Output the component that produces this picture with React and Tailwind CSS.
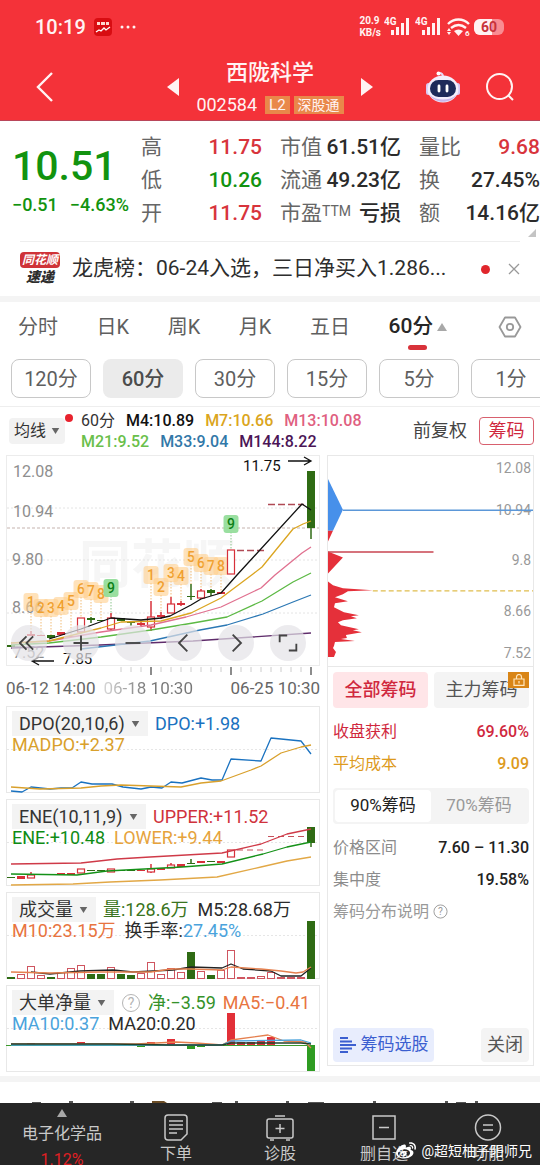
import { useState } from 'react';
import { FaWeibo } from 'react-icons/fa';

const RED = '#d7303a';
const GREEN = '#2f6b14';

// every bar sits on the same 10px pitch in all of the left hand charts
const barX = (i) => 5 + i * 10;

const QUOTES = [
  [
    { label: '高', value: '11.75', color: 'text-[#d8343c]' },
    { label: '低', value: '10.26', color: 'text-[#12930f]' },
    { label: '开', value: '11.75', color: 'text-[#d8343c]' },
  ],
  [
    { label: '市值', value: '61.51亿', color: 'text-[#2b2b2b]' },
    { label: '流通', value: '49.23亿', color: 'text-[#2b2b2b]' },
    { label: '市盈', sup: 'TTM', value: '亏损', color: 'text-[#2b2b2b]' },
  ],
  [
    { label: '量比', value: '9.68', color: 'text-[#d8343c]' },
    { label: '换', value: '27.45%', color: 'text-[#2b2b2b]' },
    { label: '额', value: '14.16亿', color: 'text-[#2b2b2b]' },
  ],
];

const PERIODS = ['分时', '日K', '周K', '月K', '五日'];
const MINUTES = ['120分', '60分', '30分', '15分', '5分', '1分'];

// [index, type, top, bottom, wick top, wick bottom]; r = hollow red, f = filled red, g = green
const CANDLES = [
  [0, 'g', 190, 192],
  [2, 'f', 179, 181, 176, 181],
  [3, 'f', 180, 181],
  [4, 'g', 180, 183],
  [5, 'f', 177, 180],
  [6, 'f', 181, 182],
  [7, 'r', 163, 177],
  [8, 'g', 163, 165, 162, 168],
  [9, 'g', 165, 166],
  [10, 'r', 163, 174, 158, 176],
  [11, 'g', 163, 166],
  [12, 'g', 167, 168, 166, 171],
  [13, 'f', 168, 170, 166, 171],
  [14, 'r', 162, 172, 146, 176],
  [15, 'f', 160, 162, 157, 164],
  [16, 'r', 149, 158, 142, 158],
  [17, 'f', 148, 150, 146, 151],
  [18, 'g', 141, 142, 129, 145],
  [19, 'r', 136, 143, 134, 144],
  [20, 'g', 135, 138, 134, 141],
  [21, 'f', 137, 139],
  [22, 'r', 95, 119],
  [30, 'g', 16, 73, 16, 84],
];

const ENE_CANDLES = [
  [0, 'g', 78, 79],
  [1, 'f', 77, 80],
  [2, 'r', 76, 79, 73, 79],
  [3, 'g', 75, 76],
  [5, 'f', 74, 76],
  [6, 'f', 74, 76],
  [7, 'r', 70, 74],
  [8, 'g', 71, 72],
  [9, 'g', 71, 72],
  [10, 'r', 70, 73],
  [11, 'g', 71, 72],
  [12, 'g', 71, 72],
  [13, 'f', 71, 72],
  [14, 'r', 70, 73, 65, 74],
  [15, 'f', 69, 71],
  [16, 'r', 66, 69, 64, 69],
  [17, 'f', 65, 68],
  [18, 'g', 64, 65, 60, 65],
  [19, 'f', 62, 64],
  [20, 'g', 62, 63],
  [21, 'f', 62, 64],
  [22, 'r', 51, 58],
  [30, 'g', 28, 44, 28, 48],
];

// nine-turn counters: [x index, y, digit]
const TURNS = [
  [2, 147, 1], [3, 153, 2], [4, 153, 3], [5, 151, 4], [6, 146, 5], [7, 134, 6], [8, 136, 7], [9, 139, 8], [10, 133, 9],
  [14, 120, 1], [15, 132, 2], [16, 118, 3], [17, 121, 4], [18, 102, 5], [19, 108, 6], [20, 111, 7], [21, 111, 8], [22, 69, 9],
];

const TURN_ENDS = [178, 180, 180, 176, 180, 162, 162, 164, 160, 146, 158, 142, 146, 129, 134, 134, 137, 95];

const AVERAGES = [
  { color: '#5f2c6b', points: '5,193 94,190 187,186 305,178' },
  { color: '#2c78b4', points: '75,194 144,186 194,175 221,170 257,159 287,147 305,140' },
  { color: '#5cb944', points: '5,190 43,188 95,182 145,175 187,168 221,162 256,146 287,127 305,118' },
  { color: '#e0708f', points: '5,188 43,186 95,177 145,170 180,162 215,152 255,133 269,120 296,98 305,92' },
  { color: '#dba520', points: '5,188 43,186 95,173 115,167 155,166 185,158 215,143 247,119 256,112 287,74 297,69 305,66' },
  { color: '#111111', points: '43,184 75,174 105,163 135,165 155,163 164,161 185,150 195,144 215,138 231,120 296,49 305,55' },
];

const VOLUMES = [
  ['g', 2], ['r', 4], ['r', 12], ['r', 3], ['g', 2], ['r', 6], ['r', 10], ['r', 13], ['g', 5], ['g', 5],
  ['r', 11], ['g', 5], ['g', 4], ['r', 5], ['r', 16], ['r', 4], ['r', 10], ['r', 6], ['g', 27], ['r', 7],
  ['g', 4], ['r', 8], ['r', 28], ['r', 1], ['r', 1], ['r', 2], ['r', 6], ['r', 1], ['r', 1], ['r', 1], ['g', 58],
];

// net big orders, positive above the base line
const NET = [
  [2, 2], [7, 3], [11, -1], [13, -2], [14, 3], [16, 6], [18, -4], [19, -2],
  [22, 32], [23, 3], [24, 3], [25, 5], [26, 8], [30, -26],
];

function Caret({ up, className }) {
  return (
    <svg viewBox="0 0 10 8" className={className} aria-hidden="true">
      <path d={up ? 'M5 0 10 8H0z' : 'M0 0h10L5 8z'} fill="currentColor" />
    </svg>
  );
}

function Line({ points, color }) {
  return <polyline points={points} fill="none" stroke={color} strokeWidth="1.3" strokeLinejoin="round" />;
}

function Candles({ data }) {
  return data.map(([i, type, top, bottom, high, low]) => {
    const x = barX(i);
    const color = type === 'g' ? GREEN : RED;
    return (
      <g key={i}>
        {high !== undefined && <path d={`M${x} ${high}V${low}`} stroke={color} strokeWidth="1.5" />}
        {type === 'r' ? (
          <rect x={x - 3.5} y={top} width="7" height={bottom - top} fill="#fff" stroke={color} strokeWidth="1.2" />
        ) : (
          <rect x={x - 4} y={top} width="8" height={bottom - top} fill={color} />
        )}
      </g>
    );
  });
}

function Signal() {
  return (
    <svg viewBox="0 0 28 22" className="h-[22px] w-7" aria-hidden="true">
      <text x="0" y="9" fontSize="10" fontWeight="700" fill="currentColor">4G</text>
      <path d="M7 14h3v5H7zM12 11h3v8h-3zM17 7h3v12h-3zM22 2h3v17h-3z" fill="currentColor" />
    </svg>
  );
}

function StatusBar() {
  return (
    <div className="flex h-[54px] items-center justify-between pl-[35px] pr-9">
      <div className="flex items-center gap-2">
        <span className="text-xl font-medium">10:19</span>
        <svg viewBox="0 0 18 18" className="size-[18px]" aria-hidden="true">
          <rect width="18" height="18" rx="4" fill="#d80d12" />
          <path d="M3 4h3v3H3zM7 4h4v3H7zM12 4h3v3h-3z" fill="#ffd9d0" />
          <path d="m2 14 3-2 2 1 3-3 2 2 4-3" fill="none" stroke="#fff" strokeWidth="1.3" />
        </svg>
        <svg viewBox="0 0 16 4" className="h-1 w-4" fill="currentColor" aria-hidden="true">
          <circle cx="2" cy="2" r="1.5" />
          <circle cx="8" cy="2" r="1.5" />
          <circle cx="14" cy="2" r="1.5" />
        </svg>
      </div>
      <div className="flex items-center gap-[3px]">
        <div className="text-[10px] font-bold leading-3">
          <div>20.9</div>
          <div>KB/s</div>
        </div>
        <Signal />
        <Signal />
        <svg viewBox="0 0 25 20" className="h-5 w-[25px]" fill="none" stroke="currentColor" aria-hidden="true">
          <path d="M2 7c6-6 15-6 21 0M5 11c5-4 10-4 15 0" strokeWidth="2.4" />
          <path d="m8 14 4.500 5 4.500-5c-3-2-6-2-9 0z" fill="currentColor" stroke="none" />
          <path d="m1 14 2-3 2 3zM1 15h4l-2 3z" fill="currentColor" stroke="none" />
          <text x="19" y="19" fontSize="8" fontWeight="700" fill="currentColor" stroke="none">6</text>
        </svg>
        <div className="relative flex h-4 w-[30px] items-center justify-center overflow-hidden rounded-md bg-[#f98c92]">
          <div className="absolute inset-y-0 left-0 w-[60%] bg-[#fff2f2]" />
          <span className="relative text-sm font-bold leading-4 text-[#c8323a]">60</span>
        </div>
      </div>
    </div>
  );
}

function Header() {
  return (
    <header className="border-b border-[#b9465a] bg-[#f43239] text-[#fff3f3]">
      <StatusBar />
      <div className="grid h-[66px] grid-cols-[1fr_auto_1fr] items-center">
        <button type="button" aria-label="返回" className="ml-[35px] justify-self-start">
          <svg viewBox="0 0 20 30" className="h-[30px] w-5" fill="none" stroke="currentColor" strokeWidth="2.400">
            <path d="M17 1 3 15l14 14" />
          </svg>
        </button>
        <div className="flex items-center gap-[17px]">
          <button type="button" aria-label="上一只">
            <svg viewBox="0 0 12 18" className="h-[18px] w-3" fill="currentColor"><path d="M12 0v18L0 9z" /></svg>
          </button>
          <div className="flex flex-col items-center gap-1">
            <h1 className="text-[22px] font-medium leading-8">西陇科学</h1>
            <div className="flex items-center gap-1">
              <span className="mr-1 text-lg leading-6">002584</span>
              <span className="bg-[#e9884a] px-1 text-[15px] leading-[18px]">L2</span>
              <span className="bg-[#e9884a] px-1 text-sm leading-[18px]">深股通</span>
            </div>
          </div>
          <button type="button" aria-label="下一只">
            <svg viewBox="0 0 12 18" className="h-[18px] w-3" fill="currentColor"><path d="m0 0 12 9L0 18z" /></svg>
          </button>
        </div>
        <div className="mr-[25px] flex items-center gap-[25px] justify-self-end">
          <button type="button" aria-label="智能助手">
            <svg viewBox="0 0 34 32" className="h-8 w-[34px]">
              <path d="M17 6c0-3-1-4-4-4" fill="none" stroke="#e6d5f5" strokeWidth="2" />
              <circle cx="12.500" cy="2.500" r="2" fill="#fff" />
              <rect x="0" y="12" width="5" height="12" rx="2.500" fill="#d9c8f4" />
              <rect x="29" y="12" width="5" height="12" rx="2.500" fill="#d9c8f4" />
              <ellipse cx="17" cy="18" rx="15.500" ry="13.500" fill="#f4eefc" />
              <path d="M4 24c6 6 20 6 26 0-4 9-22 9-26 0z" fill="#c9b8ec" />
              <rect x="4" y="9" width="26" height="17" rx="8.500" fill="#1e2a5a" />
              <path d="M13 15v5M21 15v5" stroke="#fff" strokeWidth="2.800" strokeLinecap="round" />
            </svg>
          </button>
          <button type="button" aria-label="搜索">
            <svg viewBox="0 0 30 30" className="size-[30px]" fill="none" stroke="currentColor" strokeWidth="2">
              <circle cx="14.500" cy="14.500" r="12.500" />
              <path d="m23 23 5 5" />
            </svg>
          </button>
        </div>
      </div>
    </header>
  );
}

function Quote() {
  return (
    <section className="relative flex gap-[18px] pb-[11px] pt-[10px] leading-[33px]">
      <div className="w-[123px] whitespace-nowrap pl-3 pt-[14px] font-medium text-[#12930f]">
        <div className="text-[41px] leading-[42px]">10.51</div>
        <div className="flex gap-3 text-lg leading-9">
          <span>−0.51</span>
          <span>−4.63%</span>
        </div>
      </div>
      {QUOTES.map((col) => (
        <dl key={col[0].label} className="flex-1 text-[21px]">
          {col.map((q) => (
            <div key={q.label} className="flex justify-between whitespace-nowrap">
              <dt className="flex text-[#666]">
                {q.label}
                {q.sup && <span className="text-sm leading-7">{q.sup}</span>}
              </dt>
              <dd className={`font-medium ${q.color}`}>{q.value}</dd>
            </div>
          ))}
        </dl>
      ))}
      <svg viewBox="0 0 8 8" className="absolute bottom-1 right-1 size-2" aria-hidden="true">
        <path d="M8 0v8H0z" fill="#c4c4c4" />
      </svg>
    </section>
  );
}

function News() {
  return (
    <section className="mx-5 flex h-[55px] items-center border-t border-[#eee] text-[#2e2e2e]">
      <div className="flex w-10 shrink-0 flex-col items-center italic">
        <span className="w-full rounded-sm bg-[#cf3338] text-center text-xs font-bold leading-4 text-white">同花顺</span>
        <span className="text-sm font-black leading-[18px]">速递</span>
      </div>
      <p className="ml-3 min-w-0 flex-1 whitespace-nowrap text-[21px]">龙虎榜：06-24入选，三日净买入1.286...</p>
      <span className="ml-5 size-[9px] shrink-0 rounded-full bg-[#e0262c]" />
      <button type="button" aria-label="关闭提示" className="ml-[18px] shrink-0">
        <svg viewBox="0 0 12 12" className="size-3" stroke="#999" strokeWidth="1.300"><path d="m1 1 10 10M11 1 1 11" /></svg>
      </button>
    </section>
  );
}

function PeriodTabs() {
  const [minute, setMinute] = useState('60分');
  return (
    <section className="border-b border-t-[6px] border-b-[#eee] border-t-[#f4f4f4] text-[#5f5f5f]">
      <nav className="flex h-[50px] items-center justify-between px-[18px] text-xl">
        {PERIODS.map((p) => (
          <button key={p} type="button">{p}</button>
        ))}
        <button type="button" className="relative flex items-center gap-1 text-[21px] font-medium text-[#262626]">
          60分
          <Caret up className="h-2 w-[10px] text-[#a8a8a8]" />
          <span className="absolute -bottom-2 left-[19px] h-[5px] w-[19px] rounded-full bg-[#d8323a]" />
        </button>
        <button type="button" aria-label="设置" className="ml-3">
          <svg viewBox="0 0 24 24" className="size-6" fill="none" stroke="#999" strokeWidth="1.800">
            <path d="M7 2.500h10L22.500 12 17 21.500H7L1.500 12z" strokeLinejoin="round" />
            <circle cx="12" cy="12" r="3.200" />
          </svg>
        </button>
      </nav>
      <div className="flex gap-3 overflow-hidden pb-2 pl-[11px] pt-[7px]">
        {MINUTES.map((m) => (
          <button
            key={m}
            type="button"
            onClick={() => setMinute(m)}
            className={
              m === minute
                ? 'h-[39px] w-20 shrink-0 rounded-lg bg-[#ebebeb] text-xl font-medium text-[#4c4c4c]'
                : 'h-[39px] w-20 shrink-0 rounded-lg border border-[#c8c8c8] text-xl'
            }
          >
            {m}
          </button>
        ))}
      </div>
    </section>
  );
}

function Averages() {
  return (
    <section className="flex h-12 items-center pl-[9px] pr-[6px]">
      <div className="relative">
        <label className="flex h-[26px] items-center gap-1 rounded bg-[#f2f2f2] px-[5px] text-base text-[#333]">
          <select aria-label="指标" className="appearance-none bg-transparent leading-6">
            <option>均线</option>
          </select>
          <Caret className="h-[6px] w-[9px] text-[#666]" />
        </label>
        <span className="absolute -right-2 -top-1 size-2 rounded-full bg-[#e8232e]" />
      </div>
      <div className="ml-4 flex-1 whitespace-nowrap text-base font-medium leading-[21px]">
        <div className="flex gap-[11px]">
          <span className="font-normal text-[#333]">60分</span>
          <span className="text-[#111]">M4:10.89</span>
          <span className="text-[#dba520]">M7:10.66</span>
          <span className="text-[#e0607f]">M13:10.08</span>
        </div>
        <div className="flex gap-[11px]">
          <span className="text-[#6abf4b]">M21:9.52</span>
          <span className="text-[#3278a8]">M33:9.04</span>
          <span className="text-[#4b1556]">M144:8.22</span>
        </div>
      </div>
      <button type="button" className="text-lg text-[#444]">前复权</button>
      <button type="button" className="ml-3 h-7 w-[55px] rounded-sm border border-[#d8606e] text-lg leading-6 text-[#d0283e]">筹码</button>
    </section>
  );
}

function PriceChart() {
  const tools = [
    { name: '最早', d: 'M17 4 9 12l8 8M9 4l-8 8 8 8' },
    { name: '放大', d: 'M12 3v18M3 12h18' },
    { name: '缩小', d: 'M3 12h18' },
    { name: '左移', d: 'M16 2 6 12l10 10' },
    { name: '右移', d: 'm8 2 10 10L8 22' },
    { name: '全屏', d: 'M2 11V3h9M22 13v8h-9' },
  ];
  return (
    <div>
      <div className="relative">
        <svg viewBox="0 0 314 211" className="block h-auto w-full text-[16px]">
          <rect x="0.500" y="0.500" width="313" height="210" fill="none" stroke="#ececec" />
          <text x="73" y="128" fontSize="52" fontWeight="700" fill="#f6f6f6">同花顺</text>
          <path d="M1 53H313M1 105H313M1 158H313" stroke="#e4e4e4" strokeDasharray="2 2" />
          <path d="M1 73H313" stroke="#c5b3ae" strokeDasharray="3 2" />
          <g fill="#8e8e8e">
            <text x="7" y="22">12.08</text>
            <text x="7" y="62">10.94</text>
            <text x="6" y="110">9.80</text>
            <text x="6" y="158">8.66</text>
            <text x="7" y="203">7.52</text>
          </g>
          {TURNS.map(([i, y, n], k) => (
            <g key={i}>
              <path d={`M${barX(i)} ${y + 8}V${TURN_ENDS[k]}`} stroke={n === 9 ? '#8cc48c' : '#f0bb76'} strokeDasharray="1.500 1.500" />
              <rect x={barX(i) - 7.5} y={y - 9} width="15" height="18" rx="3" fill={n === 9 ? '#8fdb96' : '#ffcf8c'} fillOpacity={n === 9 ? 0.9 : 0.6} />
              <text x={barX(i)} y={y + 5} textAnchor="middle" fontSize="14" fontWeight="500" fill={n === 9 ? '#0d7f17' : '#f0a030'}>{n}</text>
            </g>
          ))}
          <Candles data={CANDLES} />
          <path d="M231 95.500h28M262 49.500h36" stroke="#b04a55" strokeWidth="1.600" strokeDasharray="7 3" />
          {AVERAGES.map((a) => <Line key={a.color} {...a} />)}
          <text x="237" y="16" fontSize="15" fill="#111">11.75</text>
          <path d="M282 6h22M298 2l7 4-7 4" fill="none" stroke="#111" strokeWidth="1.300" />
          <text x="57" y="209" fontSize="15" fill="#111">7.85</text>
          <path d="M48 206H26M33 202l-7 4 7 4" fill="none" stroke="#111" strokeWidth="1.300" />
        </svg>
        <div className="absolute bottom-[5px] left-[5px] right-[14px] flex justify-between">
          {tools.map((t) => (
            <button key={t.name} type="button" aria-label={t.name} className="flex size-9 items-center justify-center rounded-full bg-[#e4e2e7]/70">
              <svg viewBox="0 0 24 24" className="size-5" fill="none" stroke="#444" strokeWidth="2.200"><path d={t.d} /></svg>
            </button>
          ))}
        </div>
      </div>
      <svg viewBox="0 0 314 10" className="block h-auto w-full" aria-hidden="true">
        {Array.from({ length: 20 }, (_, k) => k + 11).map((i) => (
          <path key={i} d={`M${barX(i)} 1v${i % 8 === 6 ? 8 : 5}`} stroke={i % 8 === 6 ? '#666' : '#ccc'} strokeWidth={i % 8 === 6 ? 1.5 : 1} />
        ))}
      </svg>
      <div className="flex h-6 gap-2 whitespace-nowrap text-[17px] leading-6 text-[#666]">
        <span>06-12 14:00</span>
        <span className="bg-linear-to-r from-[#d8d8d8] to-[#777] to-50% bg-clip-text text-transparent">06-18 10:30</span>
        <span className="ml-auto">06-25 10:30</span>
      </div>
    </div>
  );
}

function Panel({ name, first, second, help, children }) {
  return (
    <div className="relative min-h-[87px] border border-[#e8e8e8]">
      <svg viewBox="0 0 314 87" className="absolute -inset-px h-auto w-[calc(100%+2px)]" aria-hidden="true">
        <path d="M1 43.500H313" stroke="#e6e6e6" strokeDasharray="2 2" />
        {children}
      </svg>
      <div className="relative whitespace-nowrap pl-[5px] pt-1 text-lg">
        <div className="flex h-[25px] items-center gap-[7px] leading-[25px]">
          <label className="flex items-center gap-[6px] bg-[#f3f3f3] pl-[7px] pr-2 text-[#333]">
            <select aria-label="副图指标" className="appearance-none bg-transparent">
              <option>{name}</option>
            </select>
            <Caret className="h-[6px] w-[9px] text-[#666]" />
          </label>
          {help && (
            <svg viewBox="0 0 20 20" className="size-5 text-[#b5b5b5]" aria-hidden="true">
              <circle cx="10" cy="10" r="8.500" fill="none" stroke="currentColor" />
              <text x="10" y="15" textAnchor="middle" fontSize="14" fill="currentColor">?</text>
            </svg>
          )}
          {first}
        </div>
        <div className="flex gap-[9px] leading-[18px]">{second}</div>
      </div>
    </div>
  );
}

function DpoPanel() {
  return (
    <Panel
      name="DPO(20,10,6)"
      first={<span className="text-[#1a72c0]">DPO:+1.98</span>}
      second={<span className="text-[#d9a02c]">MADPO:+2.37</span>}
    >
      <Line color="#1a72c0" points="5,85 16,86 25,81 44,83 55,82 66,82 75,76 86,78 106,78 117,81 135,83 145,81 156,82 165,76 176,77 195,72 206,74 216,74 225,53 255,55 265,32 295,35 305,48" />
      <Line color="#d9a02c" points="5,81 34,83 75,82 95,80 115,79 145,80 175,81 195,77 215,75 245,64 255,60 275,47 295,41 305,39" />
    </Panel>
  );
}

function EnePanel() {
  return (
    <Panel
      name="ENE(10,11,9)"
      first={<span className="text-[#d0323c]">UPPER:+11.52</span>}
      second={
        <>
          <span className="text-[#0f8c14]">ENE:+10.48</span>
          <span className="text-[#e6a33c]">LOWER:+9.44</span>
        </>
      }
    >
      <Candles data={ENE_CANDLES} />
      <path d="M231 51h28M262 37.500h36" stroke="#c5525c" strokeWidth="1.200" strokeDasharray="6 4" />
      <Line color="#cf3a48" points="5,65 75,64 111,60 144,58 216,54 255,45 281,35 305,30" />
      <Line color="#149118" points="5,75 71,76 101,72 176,68 216,65 257,55 281,48 305,43" />
      <Line color="#e2a846" points="5,86 67,85 104,83 154,81 211,78 255,68 281,62 305,58" />
    </Panel>
  );
}

function VolumePanel() {
  return (
    <Panel
      name="成交量"
      first={
        <span className="flex gap-[9px]">
          <span className="text-[#3a7420]">量:128.6万</span>
          <span className="text-[#2b2b2b]">M5:28.68万</span>
        </span>
      }
      second={
        <>
          <span className="text-[#e87440]">M10:23.15万</span>
          <span className="text-[#2b2b2b]">换手率:<span className="text-[#4aa3dc]">27.45%</span></span>
        </>
      }
    >
      {VOLUMES.map(([type, h], i) =>
        type === 'g' ? (
          <rect key={i} x={barX(i) - 4} y={87 - h} width="8" height={h} fill={GREEN} />
        ) : (
          <rect key={i} x={barX(i) - 3.5} y={86.5 - h} width="7" height={h} fill="#fff" stroke="#cf5560" />
        )
      )}
      <Line color="#222222" points="25,80 44,82 74,79 107,78 127,80 147,79 167,78 185,75 216,76 225,72 237,77 265,79 275,84 295,84 305,76" />
      <Line color="#e5804f" points="5,80 44,81 95,80 145,80 165,77 185,77 216,78 225,75 255,77 275,79 290,81 297,80 305,75" />
    </Panel>
  );
}

function NetPanel() {
  return (
    <Panel
      name="大单净量"
      help
      first={
        <span className="flex gap-[7px]">
          <span className="text-[#35922a]">净:−3.59</span>
          <span className="text-[#e87440]">MA5:−0.41</span>
        </span>
      }
      second={
        <>
          <span className="text-[#4aa3dc]">MA10:0.37</span>
          <span className="text-[#2b2b2b]">MA20:0.20</span>
        </>
      }
    >
      {NET.map(([i, v]) => (
        <rect key={i} x={barX(i) - 4} y={v > 0 ? 60 - v : 60} width="8" height={Math.abs(v)} fill={v > 0 ? '#e23038' : '#2f9c22'} />
      ))}
      <path d="M0 60.500H305" stroke="#3a9a2c" />
      <Line color="#e5804f" points="5,59 130,59 170,57 190,58 216,60 225,55 262,50 278,56 299,57 305,63" />
      <Line color="#4aa3dc" points="5,60 216,60 225,56 295,55 305,58" />
      <Line color="#23402c" points="5,59 105,59 165,60 216,60 225,58 295,58 305,59" />
    </Panel>
  );
}

function ChipChart() {
  return (
    <svg viewBox="0 0 206 211" className="block h-auto w-full border-b border-[#e8e8e8] text-[14px]">
      <path d="M0 23 15 54 5 75H0z" fill="#4790ea" />
      <path d="M0 75h5L0 86zM0 96l15 6-15 16z" fill="#e5303a" />
      <path
        d="M0 126l5 4 10 3 30 2-25 1-5 3-8 3 13 4-13 2-1 4 10 5 15 3-8 1 6 2-14 2-5 2 3 3 18 4-6 1 9 2-16 3 1 3-6 1 14 2-20 1-1 4-1 2 3 4-2 5H0z"
        fill="#e5303a"
      />
      <path d="M0 96.500h106" stroke="#c94450" strokeWidth="1.500" />
      <g fill="#999" textAnchor="end">
        <text x="204" y="17">12.08</text>
        <text x="204" y="59">10.94</text>
        <text x="204" y="110">9.8</text>
        <text x="204" y="161">8.66</text>
        <text x="204" y="203">7.52</text>
      </g>
      <path d="M15 54.500h191" stroke="#5b97d8" strokeWidth="1.400" />
      <path d="M45 135.500h161" stroke="#e0bd4e" strokeWidth="1.400" strokeDasharray="5 3" />
    </svg>
  );
}

function Row({ label, value, className, valueClass }) {
  return (
    <div className={`flex justify-between text-base leading-8 ${className}`}>
      <span>{label}</span>
      <span className={`font-medium ${valueClass || ''}`}>{value}</span>
    </div>
  );
}

function ChipPanel() {
  return (
    <aside className="mb-[6px] flex flex-col border border-[#e8e8e8]">
      <ChipChart />
      <div className="flex flex-1 flex-col pb-[3px] pl-[5px] pr-1 pt-[5px]">
        <div className="grid grid-cols-2 gap-[6px] text-lg">
          <button type="button" className="h-9 rounded-sm bg-[#ffe5e8] font-medium text-[#d0283e]">全部筹码</button>
          <button type="button" className="relative h-9 rounded-sm bg-[#f4f4f4] text-[#555]">
            主力筹码
            <span className="absolute right-0 top-0 flex h-4 w-[21px] items-center justify-center bg-[#d98516]">
              <svg viewBox="0 0 12 12" className="size-3" fill="none" stroke="#ffe6bd" strokeWidth="1.200" aria-hidden="true">
                <path d="M1 5h10v6.400H1zM3.500 5V3a2.500 2.500 0 0 1 5 0v2M6 7v2.500" />
              </svg>
            </span>
          </button>
        </div>
        <Row label="收盘获利" value="69.60%" className="mt-2 text-[#d0283e]" />
        <Row label="平均成本" value="9.09" className="text-[#dd9a1c]" />
        <div className="mb-2 mt-2 grid h-9 grid-cols-2 rounded-sm bg-[#f4f4f4] p-[2px] text-[17px]">
          <button type="button" className="rounded-sm bg-white text-[#222]">90%筹码</button>
          <button type="button" className="text-[#999]">70%筹码</button>
        </div>
        <Row label="价格区间" value="7.60 – 11.30" className="text-[#8c8c8c]" valueClass="text-[#222]" />
        <Row label="集中度" value="19.58%" className="text-[#8c8c8c]" valueClass="text-[#222]" />
        <a href="#chips" className="flex items-center gap-1 text-base leading-8 text-[#999]">
          筹码分布说明
          <svg viewBox="0 0 16 16" className="size-[15px]" aria-hidden="true">
            <circle cx="8" cy="8" r="7" fill="none" stroke="currentColor" />
            <text x="8" y="12" textAnchor="middle" fontSize="11" fill="currentColor">?</text>
          </svg>
        </a>
        <div className="mt-auto flex justify-between text-[17px]">
          <button type="button" className="flex h-[34px] w-[101px] items-center justify-center gap-1 rounded-sm bg-[#e8edfd] text-[#3c5fd0]">
            <svg viewBox="0 0 18 18" className="size-[18px]" stroke="currentColor" strokeWidth="1.800" aria-hidden="true">
              <path d="M1 2h8M1 5.500h12M1 9h16M1 12.500h12M1 16h8" />
            </svg>
            筹码选股
          </button>
          <button type="button" className="h-[34px] w-12 rounded-sm bg-[#f4f4f4] text-lg text-[#555]">关闭</button>
        </div>
      </div>
    </aside>
  );
}

const NAV = [
  { label: '下单', d: 'M6 2h16a3 3 0 0 1 3 3v16l-6 6H6a3 3 0 0 1-3-3V5a3 3 0 0 1 3-3zM7 8h14M7 12h14M7 16h14M7 20h8' },
  { label: '诊股', d: 'M3 6h22a2 2 0 0 1 2 2v15a2 2 0 0 1-2 2H3a2 2 0 0 1-2-2V8a2 2 0 0 1 2-2zM9 3h10M14 11v9M9.500 15.500h9M4 27h4M20 27h4' },
  { label: '删自选', d: 'M3 3h22v23H3zM9 14.500h10' },
  { label: '功能', d: 'M14 2a12.500 12.500 0 1 0 0 25 12.500 12.500 0 0 0 0-25zM9 12h10M9 17h10' },
];

function BottomNav() {
  return (
    <nav className="relative grid h-[62px] grid-cols-[124fr_104fr_104fr_104fr_104fr] overflow-hidden bg-[#262626] text-[#c9c9c9]">
      <a href="#sector" className="flex flex-col items-center pt-[6px]">
        <Caret up className="h-2 w-3 text-[#a8a8a8]" />
        <span className="mt-1 text-base leading-[26px]">电子化学品</span>
        <span className="text-base leading-[26px] text-[#e01f24]">1.12%</span>
      </a>
      {NAV.map((n) => (
        <a key={n.label} href="#nav" className="flex flex-col items-center pt-[10px]">
          <svg viewBox="0 0 28 29" className="h-[29px] w-7" fill="none" stroke="currentColor" strokeWidth="1.500" aria-hidden="true">
            <path d={n.d} />
          </svg>
          <span className="text-base leading-6">{n.label}</span>
        </a>
      ))}
      <div className="absolute bottom-1 right-2 flex items-center gap-[5px] whitespace-nowrap text-sm leading-5 text-white">
        <FaWeibo className="size-5" />
        @超短柚子阳师兄
      </div>
    </nav>
  );
}

export default function App() {
  return (
    <div className="overflow-hidden bg-white font-[Roboto,'Noto_Sans_CJK_SC',sans-serif]">
      <Header />
      <Quote />
      <News />
      <PeriodTabs />
      <Averages />
      <main className="grid grid-cols-[314fr_207fr] gap-[7px] px-[6px]">
        <div className="flex flex-col gap-[6px]">
          <PriceChart />
          <DpoPanel />
          <EnePanel />
          <VolumePanel />
          <NetPanel />
        </div>
        <ChipPanel />
      </main>
      <div className="mt-1 border-t-[6px] border-[#f4f4f4] pt-[19px]">
        {/* top edge of the next card, mostly covered by the bar */}
        <svg viewBox="0 0 540 2" className="block h-auto w-full" fill="#555" aria-hidden="true">
          <path d="M32 1h9v1h-9zM69 0h4v2h-4zM130 0h4v2h-4zM212 1h10v1h-10zM235 0h3v2h-3zM286 0h3v2h-3zM308 1h16v1h-16zM373 0h3v2h-3zM445 0h3v2h-3zM456 1h10v1h-10zM475 0h3v2h-3z" />
          <path d="M152 0h12l3 2h-15z" fill="#6b4d26" />
        </svg>
      </div>
      <BottomNav />
    </div>
  );
}
